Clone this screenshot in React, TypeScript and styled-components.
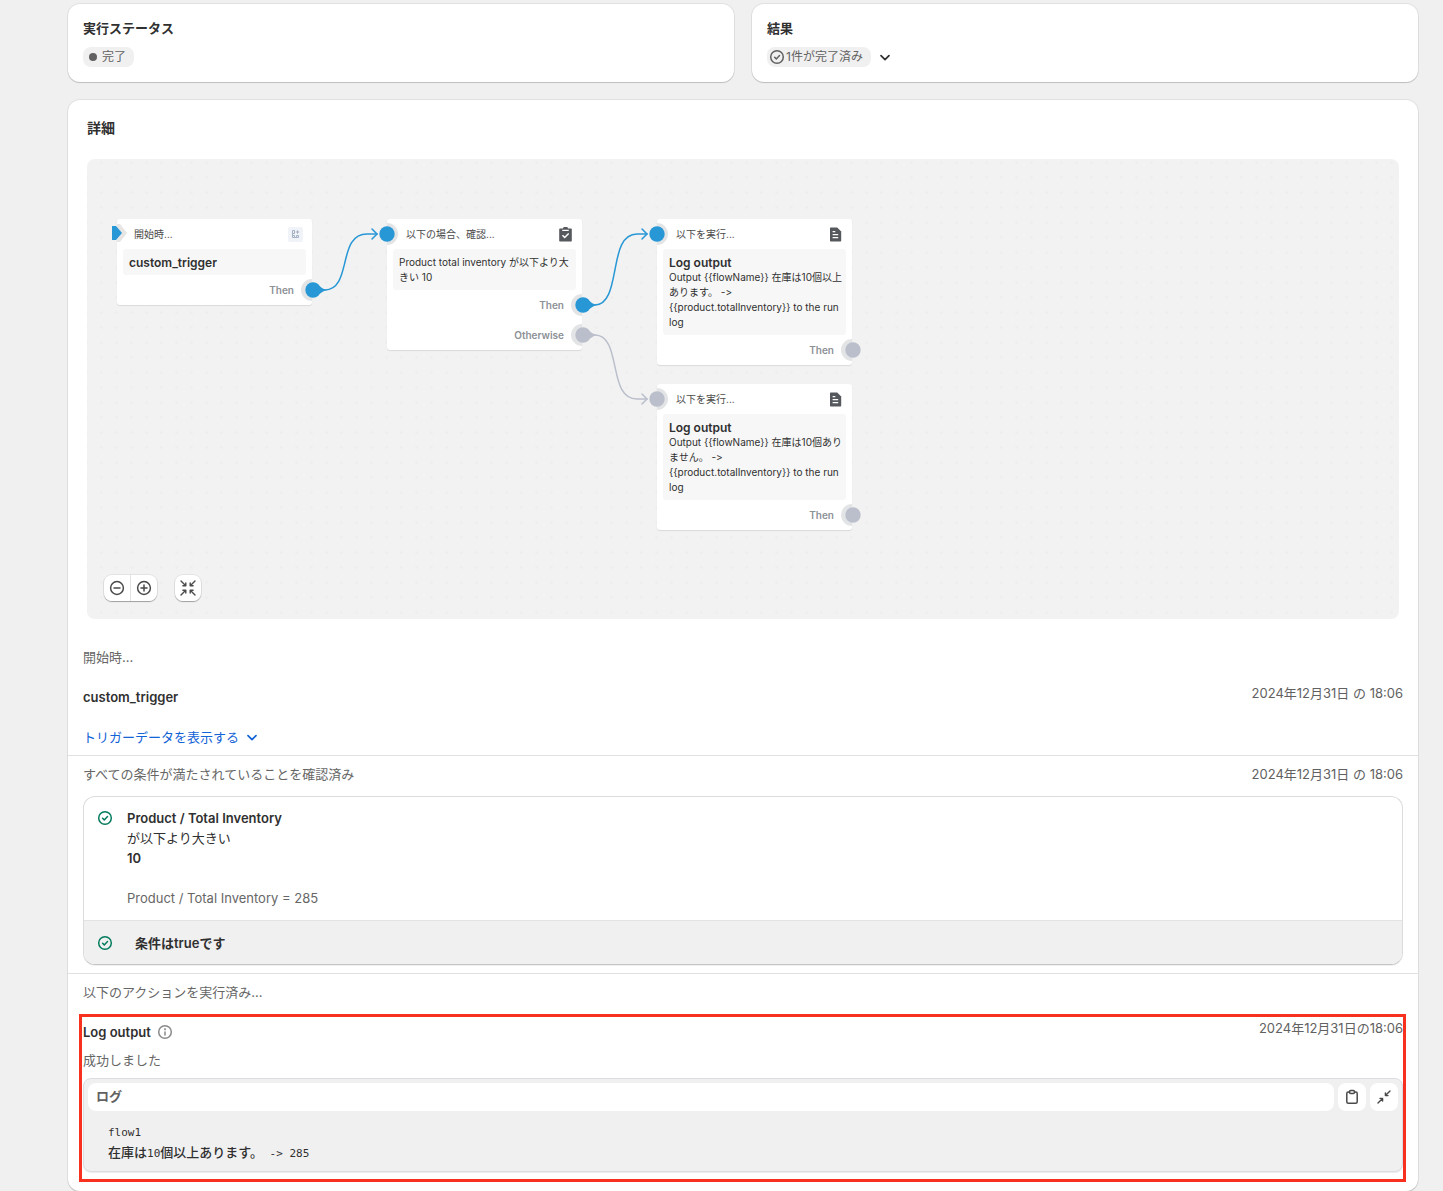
import React from "react";
import styled, { createGlobalStyle } from "styled-components";

const sans = `Inter, "Noto Sans CJK JP", sans-serif`;
const mono = `"DejaVu Sans Mono", "Noto Sans CJK JP", monospace`;

const blue = "#2897d5";
const grey = "#babfcb";
const ring = "#e3e4e6";

const GlobalStyle = createGlobalStyle`
  *, *::before, *::after { box-sizing: border-box; }
  body {
    margin: 0;
    background: #f0f0f0;
    color: #303030;
    font-family: ${sans};
    font-size: 13px;
    line-height: 20px;
  }
  button { font: inherit; color: inherit; border: 0; padding: 0; background: none; cursor: pointer; }
  h2, h3, p, pre { margin: 0; }
  h2, h3 { font-size: 13px; line-height: 20px; font-weight: 600; }
  svg { display: block; flex: none; }
`;

const Page = styled.main`
  padding: 4px 25px 0 68px;
  display: flex;
  flex-direction: column;
  gap: 18px;
`;

const SummaryRow = styled.div`
  display: flex;
  gap: 18px;
`;

const Card = styled.section`
  background: #fff;
  border-radius: 12px;
  box-shadow: 0 1px 1px rgba(0, 0, 0, 0.16), 0 0 0 1px rgba(0, 0, 0, 0.06);
`;

const SummaryCard = styled(Card)`
  flex: 1;
  padding: 14px 15px 15px;
  display: flex;
  flex-direction: column;
  gap: 9px;
`;

const BadgeLine = styled.div`
  display: flex;
  align-items: center;
  gap: 4px;
`;

const Badge = styled.span<{ $dot?: boolean }>`
  display: inline-flex;
  align-items: center;
  height: 20px;
  gap: ${(p) => (p.$dot ? "5px" : "0")};
  padding: 0 8px 0 ${(p) => (p.$dot ? "6px" : "0")};
  border-radius: 8px;
  background: #f0f0f0;
  color: #616161;
  font-size: 12px;

  svg { margin-right: -1px; }
`;

const Dot = styled.span`
  width: 8px;
  height: 8px;
  border-radius: 50%;
  background: #616161;
`;

const DetailHeading = styled.h2`
  padding: 18px 19px 21px;
  font-size: 14px;
`;

/* Workflow canvas */

const Canvas = styled.div`
  position: relative;
  height: 460px;
  margin: 0 19px;
  border-radius: 8px;
  overflow: hidden;
  background-color: #f2f2f2;
  background-image: radial-gradient(circle, #eeeeee 1px, transparent 2px);
  background-size: 15px 15px;
  background-position: 7px -4px;
  font-size: 10px;
  line-height: 15px;
  font-variant-ligatures: none;
  font-feature-settings: "calt" 0;
`;

const Wires = styled.svg`
  position: absolute;
  inset: 0;
  width: 100%;
  height: 100%;
  pointer-events: none;
`;

const Node = styled.article<{ $x: number; $y: number }>`
  position: absolute;
  left: ${(p) => p.$x}px;
  top: ${(p) => p.$y}px;
  width: 195px;
  padding: 0 6px;
  border-radius: 3px;
  overflow: hidden;
  background: #fff;
  box-shadow: 0 1px 1px rgba(0, 0, 0, 0.1);
`;

const NodeHeader = styled.header<{ $trigger?: boolean }>`
  display: flex;
  align-items: center;
  justify-content: space-between;
  height: 30px;
  padding: 0 3px 0 ${(p) => (p.$trigger ? "11px" : "13px")};
  color: #4a4a4a;
`;

const NodeBody = styled.div`
  padding: 6px 1px 5px 6px;
  border-radius: 3px;
  background: #f7f7f7;
  color: #303030;
`;

const NodeTitle = styled.h3`
  font-size: 12px;
  line-height: 15px;
`;

const NodePort = styled.div`
  display: flex;
  align-items: center;
  justify-content: flex-end;
  height: 30px;
  padding-right: 12px;
  color: #8c9196;
  font-weight: 600;
`;

const Controls = styled.div`
  position: absolute;
  left: 17px;
  bottom: 18px;
  display: flex;
  gap: 18px;
`;

const ControlGroup = styled.div`
  display: flex;
  gap: 1px;
  border-radius: 8px;
  overflow: hidden;
  background: #e3e3e3;
  box-shadow: 0 1px 1px rgba(0, 0, 0, 0.3), 0 0 0 1px rgba(0, 0, 0, 0.06);
`;

const ControlButton = styled.button`
  display: grid;
  place-items: center;
  width: 26px;
  height: 26px;
  background: #fff;
  color: #4a4a4a;
`;

/* Run steps */

const Step = styled.section<{ $first?: boolean }>`
  padding: ${(p) => (p.$first ? "28px" : "8px")} 15px 8px;
  border-bottom: 1px solid #e1e1e1;
`;

const LastStep = styled.section`
  padding: 8px 12px 9px 11px;
`;

const StepLine = styled.div`
  display: flex;
  justify-content: space-between;
`;

const Muted = styled.p`
  color: #666;
`;

const LastLabel = styled(Muted)`
  padding-left: 4px;
`;

const Time = styled.time`
  color: #616161;
`;

const StepTitle = styled(StepLine)`
  padding: 16px 0 20px;

  h3 { padding-top: 4px; }
`;

const LinkButton = styled.button`
  display: flex;
  align-items: center;
  gap: 3px;
  color: #1263d6;
`;

const ConditionBox = styled.div`
  margin-top: 12px;
  border: 1px solid #dcdcdc;
  border-bottom-color: #c4c4c4;
  border-radius: 12px;
  overflow: hidden;
  box-shadow: 0 1px 0 rgba(0, 0, 0, 0.06);
`;

const Condition = styled.div`
  display: flex;
  gap: 12px;
  padding: 11px 11px 12px;
`;

const Spaced = styled(Muted)`
  padding-top: 20px;
`;

const ConditionResult = styled.div`
  display: flex;
  align-items: center;
  gap: 20px;
  height: 44px;
  padding: 0 11px;
  border-top: 1px solid #e3e3e3;
  background: #f0f0f0;
  font-weight: 600;
`;

const Highlight = styled.div`
  margin-top: 12px;
  padding: 1px 0 7px 1px;
  border: 3px solid #f83020;
`;

const ActionTitle = styled.div`
  display: flex;
  align-items: center;
  gap: 4px;
  padding: 4px 0 8px;
`;

const LogBox = styled.div`
  margin-top: 8px;
  padding: 4px;
  border: 1px solid #dcdde2;
  border-radius: 8px;
  background: #f0f0f0;
  box-shadow: 0 1px 1px rgba(0, 0, 0, 0.08);
`;

const LogBar = styled.div`
  display: flex;
  gap: 4px;
`;

const LogTitle = styled.h3`
  flex: 1;
  height: 28px;
  padding: 3px 8px;
  border-radius: 8px;
  background: #fff;
  color: #616161;
`;

const LogButton = styled.button`
  display: grid;
  place-items: center;
  width: 28px;
  height: 28px;
  border-radius: 8px;
  background: #fff;
  color: #4a4a4a;
`;

const LogText = styled.pre`
  padding: 12px 20px 4px;
  font-family: ${mono};
  font-size: 11px;
  line-height: 20px;
`;

const LogLine = styled.div`
  height: 20px;
`;

const Japanese = styled.span`
  font-size: 13px;
  font-weight: 500;
`;

/* Icons */

const Icon = ({ children, color = "currentColor" }: { children: React.ReactNode; color?: string }) => (
  <svg width={20} height={20} viewBox="0 0 20 20" fill="none" stroke={color} strokeWidth="1.5" strokeLinecap="round" strokeLinejoin="round" aria-hidden="true">
    {children}
  </svg>
);

const CheckCircle = ({ color }: { color?: string }) => (
  <Icon color={color}>
    <circle cx="10" cy="10" r="6.3" />
    <path d="M7.6 10.2l1.7 1.7 3.2-3.3" />
  </Icon>
);

const Chevron = () => (
  <Icon><path d="M6 8.6l4 4 4-4" strokeWidth="1.7" /></Icon>
);

const InfoIcon = () => (
  <Icon color="#8a8a8a">
    <circle cx="10" cy="10" r="6.3" />
    <path d="M10 10v3" />
    <circle cx="10" cy="7.3" r="0.4" />
  </Icon>
);

const CollapseIcon = () => (
  <Icon>
    <path d="M3 3l4.5 4.5M7.8 4.9v2.9H4.9M17 3l-4.5 4.5M12.200 4.900v2.900h2.900M3 17l4.500-4.500M4.900 12.200h2.900v2.900M17 17l-4.500-4.500M12.200 15.100v-2.900h2.900" strokeWidth="1.4" />
  </Icon>
);

const MinimizeIcon = () => (
  <Icon>
    <path d="M16 4l-4.300 4.300M11.400 6v2.600H14M4 16l4.300-4.300M6 11.400h2.600V14" strokeWidth="1.4" />
  </Icon>
);

const ClipboardIcon = () => (
  <Icon>
    <path d="M7.5 5H6.3C5.3 5 4.8 5.6 4.8 6.5v8.2c0 1 .5 1.5 1.5 1.5h7.4c1 0 1.5-.5 1.5-1.5V6.5c0-.9-.5-1.5-1.5-1.5h-1.2" />
    <path d="M8.7 3.6h2.6c.8 0 1.2.4 1.2 1.1v.6c0 .7-.4 1.1-1.2 1.1H8.7c-.8 0-1.2-.4-1.2-1.1v-.6c0-.7.4-1.1 1.2-1.1z" />
  </Icon>
);

const TriggerIcon = () => (
  <svg width="15" height="15" viewBox="0 0 15 15" fill="none" stroke="#a3afc2" aria-hidden="true">
    <rect width="15" height="15" rx="2" fill="#f0f3f7" stroke="none" />
    <path d="M4.5 3.5h2v3h-2zM4.5 8.5h2v2h-2zM4.5 6.5v2M8.5 8.5h2v2h-2zM9.5 3.3v3.4M7.8 5h3.4M6.5 10.5h2" />
  </svg>
);

const CheckDocIcon = () => (
  <svg width="15" height="15" viewBox="0 0 15 15" aria-hidden="true">
    <path d="M2.2 1.6h2.6a2.8 2.8 0 0 1 5.4 0h2.6c.7 0 1 .4 1 1v10.8c0 .6-.4 1-1 1H2.2c-.6 0-1-.4-1-1V2.6c0-.6.4-1 1-1z" fill="#55585c" />
    <path d="M4.3 3.4h6.4" stroke="#fff" strokeWidth="1.3" />
    <path d="M4.5 8.3l2.2 2.2 4-4" fill="none" stroke="#fff" strokeWidth="1.5" />
  </svg>
);

const DocIcon = () => (
  <svg width="15" height="15" viewBox="0 0 15 15" aria-hidden="true">
    <path d="M3 .6h6.2l4 4v8.800c0 .6-.4 1-1 1H3c-.6 0-1-.4-1-1V1.6c0-.6.4-1 1-1z" fill="#55585c" />
    <path d="M4.6 4.6h2.7M4.6 7.6h5.6M4.6 10.6h5.6" stroke="#fff" strokeWidth="1.3" />
  </svg>
);

/* Ports and the connections between them */

type Point = { x: number; y: number };

const wire = (a: Point, b: Point) => {
  const mx = (a.x + b.x) / 2;
  const my = (a.y + b.y) / 2;
  const dy = b.y - a.y;
  return `M${a.x} ${a.y}H${a.x + 12}C${a.x + 26} ${a.y} ${mx - 3} ${my - dy * 0.22} ${mx} ${my}S${b.x - 26} ${b.y} ${b.x - 10} ${b.y}H${b.x}`;
};

const Connection = ({ from, to, color }: { from: Point; to: Point; color: string }) => (
  <g fill="none" stroke={color} strokeWidth="1.5" strokeLinecap="round">
    <path d={wire(from, to)} />
    <path d={`M${to.x - 5} ${to.y - 5}l5 5-5 5`} />
    <path d={`M${from.x + 4} ${from.y - 6.5}Q${from.x + 9} ${from.y - 1} ${from.x + 14} ${from.y}Q${from.x + 9} ${from.y + 1} ${from.x + 4} ${from.y + 6.5}z`} fill={color} stroke="none" />
  </g>
);

const Port = ({ x, y, color, side }: Point & { color: string; side: "in" | "out" }) => (
  <g>
    <path d={side === "in" ? `M${x} ${y - 11}a11 11 0 0 1 0 22z` : `M${x - 1} ${y - 11}a11 11 0 0 0 0 22z`} fill={ring} />
    <circle cx={x} cy={y} r="7.7" fill={color} />
  </g>
);

const links = [
  { from: { x: 226, y: 131 }, to: { x: 290, y: 75 }, color: blue },
  { from: { x: 496, y: 146 }, to: { x: 560, y: 75 }, color: blue },
  { from: { x: 496, y: 176 }, to: { x: 560, y: 240 }, color: grey },
];

const ports: (Point & { color: string; side: "in" | "out" })[] = [
  { x: 226, y: 131, color: blue, side: "out" },
  { x: 300, y: 75, color: blue, side: "in" },
  { x: 496, y: 146, color: blue, side: "out" },
  { x: 496, y: 176, color: grey, side: "out" },
  { x: 570, y: 75, color: blue, side: "in" },
  { x: 766, y: 191, color: grey, side: "out" },
  { x: 570, y: 240, color: grey, side: "in" },
  { x: 766, y: 356, color: grey, side: "out" },
];

const actions = [
  { y: 60, text: "Output {{flowName}} 在庫は10個以上あります。 -> {{product.totalInventory}} to the run log" },
  { y: 225, text: "Output {{flowName}} 在庫は10個ありません。 -> {{product.totalInventory}} to the run log" },
];

const Workflow = () => (
  <Canvas>
    <Node $x={30} $y={60}>
      <NodeHeader $trigger>開始時...<TriggerIcon /></NodeHeader>
      <NodeBody><NodeTitle>custom_trigger</NodeTitle></NodeBody>
      <NodePort>Then</NodePort>
    </Node>
    <Node $x={300} $y={60}>
      <NodeHeader>以下の場合、確認...<CheckDocIcon /></NodeHeader>
      <NodeBody>Product total inventory が以下より大きい 10</NodeBody>
      <NodePort>Then</NodePort>
      <NodePort>Otherwise</NodePort>
    </Node>
    {actions.map((a) => (
      <Node key={a.y} $x={570} $y={a.y}>
        <NodeHeader>以下を実行...<DocIcon /></NodeHeader>
        <NodeBody>
          <NodeTitle>Log output</NodeTitle>
          <p>{a.text}</p>
        </NodeBody>
        <NodePort>Then</NodePort>
      </Node>
    ))}
    <Wires aria-hidden="true">
      <path d="M30 65h3l7 9-7 9h-3z" fill="#e8e5e5" />
      <path d="M25 67h4l6 7-6 7h-4z" fill={blue} />
      {ports.map((p) => <Port key={`${p.x}-${p.y}`} {...p} />)}
      {links.map((l) => <Connection key={`${l.from.x}-${l.from.y}`} {...l} />)}
    </Wires>
    <Controls>
      <ControlGroup>
        <ControlButton aria-label="縮小">
          <Icon><circle cx="10" cy="10" r="6.4" /><path d="M7 10h6" /></Icon>
        </ControlButton>
        <ControlButton aria-label="拡大">
          <Icon><circle cx="10" cy="10" r="6.4" /><path d="M7 10h6M10 7v6" /></Icon>
        </ControlButton>
      </ControlGroup>
      <ControlGroup>
        <ControlButton aria-label="全体を表示"><CollapseIcon /></ControlButton>
      </ControlGroup>
    </Controls>
  </Canvas>
);

export default function App() {
  return (
    <>
      <GlobalStyle />
      <Page>
        <SummaryRow>
          <SummaryCard>
            <h2>実行ステータス</h2>
            <BadgeLine><Badge $dot><Dot />完了</Badge></BadgeLine>
          </SummaryCard>
          <SummaryCard>
            <h2>結果</h2>
            <BadgeLine>
              <Badge><CheckCircle />1件が完了済み</Badge>
              <button aria-label="結果を開く"><Chevron /></button>
            </BadgeLine>
          </SummaryCard>
        </SummaryRow>
        <Card>
          <DetailHeading>詳細</DetailHeading>
          <Workflow />
          <Step $first>
            <Muted>開始時...</Muted>
            <StepTitle>
              <h3>custom_trigger</h3>
              <Time>2024年12月31日 の 18:06</Time>
            </StepTitle>
            <LinkButton>トリガーデータを表示する<Chevron /></LinkButton>
          </Step>
          <Step>
            <StepLine>
              <Muted>すべての条件が満たされていることを確認済み</Muted>
              <Time>2024年12月31日 の 18:06</Time>
            </StepLine>
            <ConditionBox>
              <Condition>
                <CheckCircle color="#047b5d" />
                <div>
                  <h3>Product / Total Inventory</h3>
                  <p>が以下より大きい</p>
                  <h3>10</h3>
                  <Spaced>Product / Total Inventory = 285</Spaced>
                </div>
              </Condition>
              <ConditionResult><CheckCircle color="#047b5d" />条件はtrueです</ConditionResult>
            </ConditionBox>
          </Step>
          <LastStep>
            <LastLabel>以下のアクションを実行済み...</LastLabel>
            <Highlight>
              <StepLine>
                <ActionTitle><h3>Log output</h3><InfoIcon /></ActionTitle>
                <Time>2024年12月31日の18:06</Time>
              </StepLine>
              <Muted>成功しました</Muted>
              <LogBox>
                <LogBar>
                  <LogTitle>ログ</LogTitle>
                  <LogButton aria-label="コピー"><ClipboardIcon /></LogButton>
                  <LogButton aria-label="折りたたむ"><MinimizeIcon /></LogButton>
                </LogBar>
                <LogText>
                  <LogLine>flow1</LogLine>
                  <LogLine>
                    <Japanese>在庫は</Japanese>10<Japanese>個以上あります。</Japanese>{" -> 285"}
                  </LogLine>
                </LogText>
              </LogBox>
            </Highlight>
          </LastStep>
        </Card>
      </Page>
    </>
  );
}
